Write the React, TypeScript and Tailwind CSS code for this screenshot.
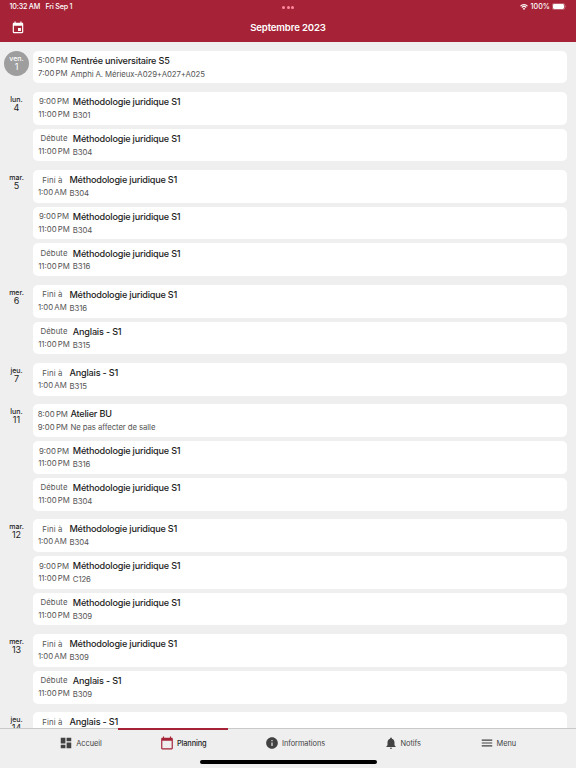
import { MdCalendarToday, MdDashboard, MdEvent, MdInfo, MdMenu, MdNotifications } from 'react-icons/md';

type EventItem = {
  start: string;
  end: string;
  title: string;
  room: string;
};

type Day = {
  name: string;
  date: number;
  events: EventItem[];
};

const METHODO = 'Méthodologie juridique S1';

const days: Day[] = [
  {
    name: 'ven.',
    date: 1,
    events: [
      { start: '5:00 PM', end: '7:00 PM', title: 'Rentrée universitaire S5', room: 'Amphi A. Mérieux-A029+A027+A025' },
    ],
  },
  {
    name: 'lun.',
    date: 4,
    events: [
      { start: '9:00 PM', end: '11:00 PM', title: METHODO, room: 'B301' },
      { start: 'Débute', end: '11:00 PM', title: METHODO, room: 'B304' },
    ],
  },
  {
    name: 'mar.',
    date: 5,
    events: [
      { start: 'Fini à', end: '1:00 AM', title: METHODO, room: 'B304' },
      { start: '9:00 PM', end: '11:00 PM', title: METHODO, room: 'B304' },
      { start: 'Débute', end: '11:00 PM', title: METHODO, room: 'B316' },
    ],
  },
  {
    name: 'mer.',
    date: 6,
    events: [
      { start: 'Fini à', end: '1:00 AM', title: METHODO, room: 'B316' },
      { start: 'Débute', end: '11:00 PM', title: 'Anglais - S1', room: 'B315' },
    ],
  },
  {
    name: 'jeu.',
    date: 7,
    events: [{ start: 'Fini à', end: '1:00 AM', title: 'Anglais - S1', room: 'B315' }],
  },
  {
    name: 'lun.',
    date: 11,
    events: [
      { start: '8:00 PM', end: '9:00 PM', title: 'Atelier BU', room: 'Ne pas affecter de salle' },
      { start: '9:00 PM', end: '11:00 PM', title: METHODO, room: 'B316' },
      { start: 'Débute', end: '11:00 PM', title: METHODO, room: 'B304' },
    ],
  },
  {
    name: 'mar.',
    date: 12,
    events: [
      { start: 'Fini à', end: '1:00 AM', title: METHODO, room: 'B304' },
      { start: '9:00 PM', end: '11:00 PM', title: METHODO, room: 'C126' },
      { start: 'Débute', end: '11:00 PM', title: METHODO, room: 'B309' },
    ],
  },
  {
    name: 'mer.',
    date: 13,
    events: [
      { start: 'Fini à', end: '1:00 AM', title: METHODO, room: 'B309' },
      { start: 'Débute', end: '11:00 PM', title: 'Anglais - S1', room: 'B309' },
    ],
  },
  {
    name: 'jeu.',
    date: 14,
    events: [{ start: 'Fini à', end: '1:00 AM', title: 'Anglais - S1', room: 'B309' }],
  },
];

// hour and AM/PM are separated by a thin gap
function Time({ value }: { value: string }) {
  const match = value.match(/^(\S+) (AM|PM)$/);
  if (!match) return <span className="tracking-[0.1px]">{value}</span>;
  return (
    <span className="flex gap-[1.2px]">
      <span>{match[1]}</span>
      <span>{match[2]}</span>
    </span>
  );
}

// the time column is as wide as the end time
function timeWidth(end: string) {
  if (end.startsWith('11')) return 'w-[32px]';
  if (end.endsWith('AM')) return 'w-[28.7px]';
  return 'w-[29.7px]';
}

function EventCard({ event }: { event: EventItem }) {
  return (
    <div className="flex h-[32.8px] gap-[2.8px] rounded-[5px] bg-white pl-[5px] whitespace-nowrap">
      <div className={`${timeWidth(event.end)} flex shrink-0 flex-col items-center pt-[3.7px] text-[7.8px] leading-[12.7px] text-[#555]`}>
        <Time value={event.start} />
        <Time value={event.end} />
      </div>
      <div className="pt-[4.3px]">
        <p className="text-[9.1px] leading-[12.7px] font-medium tracking-[-0.19px] text-[#1c1c1c]">{event.title}</p>
        <p className="text-[7.8px] leading-[12.7px] tracking-[-0.1px] text-[#555]">{event.room}</p>
      </div>
    </div>
  );
}

function DayLabel({ day, past }: { day: Day; past: boolean }) {
  return (
    <div className="w-[33px] shrink-0 pl-[4px]">
      <div
        className={`flex size-[25px] flex-col items-center rounded-full pt-[3px] text-center ${
          past ? 'bg-[#9e9e9e] text-white' : 'text-[#222]'
        }`}
      >
        <span className="text-[7px] leading-[9px] font-medium">{day.name}</span>
        <span className="text-[9px] leading-[8px]">{day.date}</span>
      </div>
    </div>
  );
}

const tabs = [
  { label: 'Accueil', Icon: MdDashboard, position: 'pl-[59.3px] w-[160px]' },
  { label: 'Planning', Icon: MdCalendarToday, position: 'w-[105px]' },
  { label: 'Informations', Icon: MdInfo, position: 'w-[118.5px]' },
  { label: 'Notifs', Icon: MdNotifications, position: 'w-[96px]' },
  { label: 'Menu', Icon: MdMenu, position: '' },
];

export default function App() {
  return (
    <div className="flex h-[768px] w-[576px] flex-col overflow-hidden bg-[#efefef] font-['Inter',sans-serif]">
      <header className="h-[42px] shrink-0 bg-[#a62337] text-white">
        <div className="grid h-[14px] grid-cols-3 items-center pl-[9.5px] pr-[9px] text-[7.2px] font-medium">
          <div className="flex gap-[5.4px] tracking-[-0.22px]">
            <span>10:32 AM</span>
            <span>Fri Sep 1</span>
          </div>
          <div className="flex justify-center gap-[1.5px]">
            <i className="size-[3px] rounded-full bg-[#ff8aa0]" />
            <i className="size-[3px] rounded-full bg-[#ff8aa0]" />
            <i className="size-[3px] rounded-full bg-[#ff8aa0]" />
          </div>
          <div className="flex items-center justify-end gap-[2.5px]">
            <svg className="h-[6px] w-[8px]" viewBox="0 0 16 12" fill="none" stroke="white" strokeWidth="2.2">
              <path d="M1 4.2a10 10 0 0 1 14 0M3.6 7a6.3 6.3 0 0 1 8.8 0" />
              <path d="M8 11.8 5.6 9.3a3.4 3.4 0 0 1 4.8 0z" fill="white" stroke="none" />
            </svg>
            <span>100%</span>
            <svg className="h-[7px] w-[14.5px]" viewBox="0 0 15 7">
              <rect x="0.3" y="0.3" width="12.8" height="6.4" rx="1.8" fill="none" stroke="#d3919b" strokeWidth="0.6" />
              <rect x="1" y="1" width="11.4" height="5" rx="1.2" fill="white" />
              <path d="M13.8 2.3v2.2c.8-.3.8-1.9 0-2.2z" fill="#d3919b" />
            </svg>
          </div>
        </div>
        <div className="grid h-[28px] grid-cols-[1fr_auto_1fr] items-center pl-[11.3px] pr-[11.3px]">
          <MdEvent className="size-[14px]" />
          <h1 className="text-[9.6px] font-semibold tracking-[-0.14px]">Septembre 2023</h1>
        </div>
      </header>

      <main className="flex min-h-0 flex-1 flex-col gap-[8.5px] overflow-hidden pt-[8.5px] pr-[9px]">
        {days.map((day) => (
          <section key={day.date} className="flex shrink-0">
            <DayLabel day={day} past={day.date === 1} />
            <div className="flex flex-1 flex-col gap-[4px]">
              {day.events.map((event, index) => (
                <EventCard key={index} event={event} />
              ))}
            </div>
          </section>
        ))}
      </main>

      <nav className="relative h-[40px] shrink-0 border-t border-[#c9c9c9] text-[7.4px] text-[#444]">
        <div className="absolute -top-px left-[118px] h-[2px] w-[110px] bg-[#a62337]" />
        <div className="flex h-[28px] items-center">
          {tabs.map(({ label, Icon, position }) => {
            const active = label === 'Planning';
            return (
              <div key={label} className={`flex shrink-0 items-center gap-[3px] ${position}`}>
                <Icon className={`size-[14px] ${active ? 'text-[#a62337]' : 'text-[#424242]'}`} />
                <span className={`pt-[1.5px] ${active ? 'font-medium tracking-[-0.15px] text-[#222]' : 'tracking-[-0.05px]'}`}>
                  {label}
                </span>
              </div>
            );
          })}
        </div>
        <div className="mx-auto mt-[3.2px] h-[3.4px] w-[177px] rounded-full bg-black" />
      </nav>
    </div>
  );
}
